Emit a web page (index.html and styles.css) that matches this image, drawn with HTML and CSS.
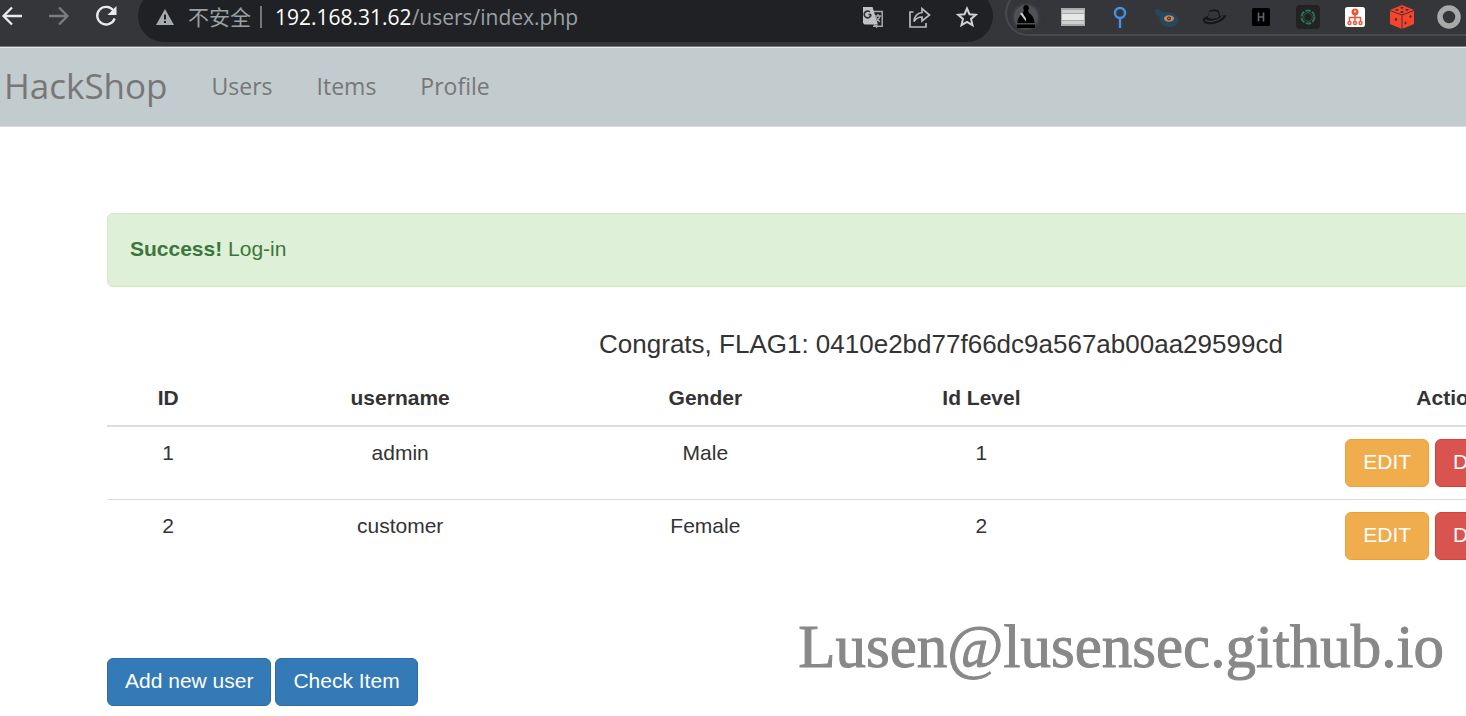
FILE: index.html
```html
<!DOCTYPE html>
<html lang="en">
<head>
<meta charset="utf-8">
<title>HackShop</title>
<link rel="stylesheet" href="styles.css">
</head>
<body>
<header class="toolbar">
  <div class="history">
    <button class="icon-btn" aria-label="Back"><svg width="24" height="24" viewBox="0 0 24 24" fill="none" stroke="#e8eaed" stroke-width="2.3"><path d="M22 12H4M12 3.5 3.5 12l8.5 8.5"/></svg></button>
    <button class="icon-btn" aria-label="Forward"><svg width="24" height="24" viewBox="0 0 24 24" fill="none" stroke="#7b7d80" stroke-width="2.3"><path d="M2 12h18M12 3.5l8.5 8.5-8.5 8.5"/></svg></button>
    <button class="icon-btn" aria-label="Reload"><svg width="24" height="24" viewBox="0 0 24 24" fill="none" stroke="#e8eaed" stroke-width="2.3"><path d="M19.5 6.5A9 8.8 0 1 0 20.7 14.500"/><path d="M22.500 2v9h-9z" fill="#e8eaed" stroke="none"/></svg></button>
  </div>
  <div class="address">
    <svg width="18" height="16" viewBox="0 0 18 16"><path d="M9 0l9 16H0z" fill="#a6a9ad"/><path d="M8 5.500h2v5H8zM8 12h2v2H8z" fill="#202124"/></svg>
    <span class="insecure">不安全</span>
    <span class="divider"></span>
    <span class="url"><span class="host">192.168.31.62</span>/users/index.php</span>
    <div class="address-actions">
      <button class="icon-btn" aria-label="Translate"><svg width="24" height="24" viewBox="0 0 24 24"><path d="M9 6.500h12.200v14.700H12" fill="none" stroke="#a9abae" stroke-width="1.500"/><path d="M2 2h9.500L17 19.500H3.500L2 18z" fill="#bfc1c4"/><path d="M10 9.500H7.500M10 9.500A3.400 3.400 0 1 1 8.800 6.800" fill="none" stroke="#303134" stroke-width="1.700"/><path d="M13.500 11H20M17 9v2M19 11c-.5 2.500-2 4-3.500 5M14.800 12c1 2 2.500 3.500 4.200 5M13 19.500l2.500 2.500v-2.500" fill="none" stroke="#a9abae" stroke-width="1.300"/></svg></button>
      <button class="icon-btn" aria-label="Share"><svg width="24" height="24" viewBox="0 0 24 24" fill="none" stroke="#b8babd" stroke-width="1.700"><path d="M5.500 7H2v15h16v-4"/><path d="M6 16.500C6.500 10.500 9.500 8 14 7.500V3.500l7.500 6.500-7.500 6v-4c-3.500 0-6 1.200-8 4.500z"/></svg></button>
      <button class="icon-btn" aria-label="Bookmark"><svg width="24" height="24" viewBox="0 0 24 24" fill="none" stroke="#cfd1d4" stroke-width="2"><path d="M12 3.500l2.500 5.700 6.300.6-4.800 4.100 1.500 6.200-5.500-3.300-5.500 3.300L8 13.900 3.200 9.800l6.300-.6z"/></svg></button>
    </div>
  </div>
  <div class="extensions">
    <button class="icon-btn glow" aria-label="Chess"><svg width="24" height="24" viewBox="0 0 24 24"><path d="M12 0a3 3 0 0 1 2 5.200l1 2.800c3 2 5.500 5.500 5.500 10h-17C3.500 13 6 10 9 8l1-3A3 3 0 0 1 12 0zM3 19.500h18V23H3z" fill="#000"/><path d="M6 8.500l6 8v-3L8 7.500z" fill="#d2d2d2"/></svg></button>
    <button class="icon-btn" aria-label="Proxy"><svg width="24" height="24" viewBox="0 0 24 24"><path d="M0 3h24v18H0z" fill="#aaa"/><path d="M1 5h22v3H1zM1 16h22v3H1z" fill="#cfcfcf"/><path d="M1 9h22v6H1z" fill="#e6e6e6"/></svg></button>
    <button class="icon-btn" aria-label="Locate"><svg width="24" height="24" viewBox="0 0 24 24" fill="none" stroke="#4591e8" stroke-width="2.400"><circle cx="12" cy="8" r="5"/><path d="M12 13v10"/></svg></button>
    <button class="icon-btn" aria-label="Watch"><svg width="24" height="24" viewBox="0 0 24 24"><path d="M0 5l3-1.500 5 4c5-2 15 1 15.500 7 0 5-4 7.500-9 7.500S5 19 4.500 12L0 8z" fill="#24495f"/><ellipse cx="14" cy="13.500" rx="5" ry="3.200" fill="#d9824c"/><circle cx="14" cy="13.500" r="2" fill="#26394a"/><circle cx="14" cy="13.500" r=".7" fill="#e69b6d"/></svg></button>
    <button class="icon-btn" aria-label="Hat"><svg width="24" height="24" viewBox="0 0 24 24"><path d="M1 15c0-3 5-4 5-4l1-5c2-2 9-2 10 0l1 5 6-1c1 3-5 7-13 9-6 1-10-1-10-4z" fill="#151618"/><path d="M7 7c2-1 7-1 9 0l1 5c-3 2-8 2-11 1z" fill="#35363a"/><path d="M3 15c5 3 13 1 18-4" fill="none" stroke="#4b4c4f" stroke-width="1"/></svg></button>
    <button class="icon-btn" aria-label="Bar"><svg width="24" height="24" viewBox="0 0 24 24"><rect x="3" y="3" width="18" height="18" rx="1.500" fill="#000"/><path d="M9.500 7.500v9M14.500 7.500v9M9.500 12h5" stroke="#62656a" stroke-width="1.600"/></svg></button>
    <button class="icon-btn" aria-label="Ring"><svg width="24" height="24" viewBox="0 0 24 24"><rect width="24" height="24" rx="4" fill="#222"/><circle cx="12" cy="12" r="6.500" fill="none" stroke="#2e7058" stroke-width="2" stroke-dasharray="5.500 1.300"/><circle cx="12" cy="12" r="4.300" fill="none" stroke="#285845" stroke-width="1"/></svg></button>
    <button class="icon-btn" aria-label="Site map"><svg width="24" height="24" viewBox="0 0 24 24"><rect x="2" y="2" width="20" height="20" rx="2.500" fill="#fff"/><g fill="none" stroke="#ef5335" stroke-width="1.400"><circle cx="12" cy="7" r="2.800" fill="#ef5335"/><path d="M12 9v8M6.500 17v-4.500h11V17"/><circle cx="6.500" cy="18" r="1.500"/><circle cx="12" cy="18" r="1.500"/><circle cx="17.500" cy="18" r="1.500"/></g><circle cx="12" cy="6.500" r="1" fill="#fff"/></svg></button>
    <button class="icon-btn" aria-label="Dice"><svg width="24" height="24" viewBox="0 0 24 24"><path d="M12 0l12 5v14l-12 5L0 19V5z" fill="#fb432b"/><path d="M0 5.500L12 10l12-4.500M12 10v14" fill="none" stroke="#35363a" stroke-width="1"/><g fill="#35363a"><ellipse cx="12" cy="2.800" rx="1.700" ry=".9"/><ellipse cx="7" cy="4.800" rx="1.700" ry=".9"/><ellipse cx="17" cy="4.800" rx="1.700" ry=".9"/><ellipse cx="12" cy="7" rx="1.700" ry=".9"/><ellipse cx="6" cy="14.500" rx="1.100" ry="1.700"/><ellipse cx="20.500" cy="11.500" rx="1" ry="1.600"/><ellipse cx="15.500" cy="18" rx="1" ry="1.600"/></g></svg></button>
    <button class="icon-btn" aria-label="Circle"><svg width="24" height="24" viewBox="0 0 24 24"><circle cx="12" cy="12" r="9" fill="none" stroke="#a9a9a9" stroke-width="5.500"/></svg></button>
  </div>
</header>

<nav class="navbar">
  <a class="brand" href="#">HackShop</a>
  <a href="#">Users</a>
  <a href="#">Items</a>
  <a href="#">Profile</a>
</nav>

<main class="container">
  <div class="alert" role="status"><strong>Success!</strong> Log-in</div>
  <h1 class="flag">Congrats, FLAG1: 0410e2bd77f66dc9a567ab00aa29599cd</h1>
  <table class="users">
    <colgroup><col class="col-id"><col class="col-name"><col class="col-gender"><col class="col-level"><col></colgroup>
    <thead>
      <tr><th>ID</th><th>username</th><th>Gender</th><th>Id Level</th><th>Action</th></tr>
    </thead>
    <tbody>
      <tr><td>1</td><td>admin</td><td>Male</td><td>1</td><td><div class="actions"><button class="btn edit">EDIT</button><button class="btn delete">DELETE</button></div></td></tr>
      <tr><td>2</td><td>customer</td><td>Female</td><td>2</td><td><div class="actions"><button class="btn edit">EDIT</button><button class="btn delete">DELETE</button></div></td></tr>
    </tbody>
  </table>
  <div class="page-actions">
    <button class="btn primary">Add new user</button>
    <button class="btn primary">Check Item</button>
  </div>
</main>
<div class="watermark">Lusen@lusensec.github.io</div>
</body>
</html>
```
FILE: styles.css
```css
* { box-sizing: border-box; }
body {
  position: relative;
  margin: 0;
  min-height: 100vh;
  overflow: hidden;
  background: #fff;
  color: #333;
  font: 21px/30px "Liberation Sans", Arial, sans-serif;
}
button { font: inherit; }

.toolbar {
  display: flex;
  height: 47px;
  background: #35363a;
  border-bottom: 1px solid #77797c;
  overflow: hidden;
}
.icon-btn {
  display: block;
  width: 24px;
  height: 24px;
  flex: none;
  padding: 0;
  border: 0;
  background: none;
}
.icon-btn svg { display: block; }
.history {
  display: flex;
  flex: none;
  gap: 23px;
  width: 138px;
  padding-top: 4px;
}
.address {
  display: flex;
  flex: 1;
  align-items: center;
  height: 52px;
  margin-top: -10px;
  padding: 2px 14px 0 18px;
  border-radius: 26px;
  background: #202124;
  color: #9aa0a6;
  font-family: "Open Sans", "Noto Sans CJK SC", sans-serif;
}
.insecure { margin-left: 14px; }
.divider {
  width: 2px;
  height: 22px;
  margin: 0 13px 0 9px;
  background: #74777b;
}
.host { color: #fff; }
.address-actions { display: flex; gap: 23px; margin-left: auto; }
.extensions {
  display: flex;
  flex: none;
  gap: 23px;
  height: 46px;
  margin: -10px -21px 0 12px;
  padding: 13px 26px 0 7px;
  border: 2px solid #48494d;
  border-right: 0;
  border-radius: 23px 0 0 23px;
}
.glow { border-radius: 50%; background: #505154; box-shadow: 0 0 4px #505154; }

.navbar {
  display: flex;
  align-items: center;
  gap: 44px;
  height: 80px;
  padding: 0 4px 3px;
  background: #c2cbce;
  border-top: 1px solid #e7e7e7;
  border-bottom: 1px solid #d9dddf;
  font: 23px/36px "Open Sans", "Noto Sans", sans-serif;
}
.navbar a { color: #777; text-decoration: none; }
.navbar .brand { font-size: 35px; }

.container { margin: 86px -309px 0 107px; }
.alert {
  height: 74px;
  padding: 20px 22px;
  border: 1px solid #d6e9c6;
  border-radius: 6px;
  background: #dff0d8;
  color: #3c763d;
}
.flag {
  margin: 37px 0 0;
  font-size: 26px;
  line-height: 40px;
  font-weight: 400;
  text-align: center;
}
.users {
  width: 100%;
  margin-top: 7px;
  border-collapse: separate;
  border-spacing: 0;
  table-layout: fixed;
  text-align: center;
}
.col-id { width: 7.34%; }
.col-name { width: 20.47%; }
.col-gender { width: 16.13%; }
.col-level { width: 16.97%; }
.users th { padding: 12px; border-bottom: 2px solid #ddd; }
.users td { padding: 11px 12px 12px; vertical-align: top; }
.users tbody tr + tr td { border-top: 1px solid #ddd; }
.actions { display: flex; justify-content: center; gap: 6px; padding-top: 1px; }
.btn {
  height: 48px;
  padding: 0 17px 2px;
  border: 1px solid;
  border-radius: 6px;
  color: #fff;
}
.edit { background: #f0ad4e; border-color: #eea236; }
.delete { background: #d9534f; border-color: #d43f3a; }
.primary { background: #337ab7; border-color: #2e6da4; }
.page-actions { display: flex; gap: 4px; margin-top: 86px; }

.watermark {
  position: absolute;
  right: 22px;
  bottom: 34px;
  color: #888;
  font: 61px/70px "Liberation Serif", "Times New Roman", serif;
  -webkit-text-stroke: 1px #888;
}
```
